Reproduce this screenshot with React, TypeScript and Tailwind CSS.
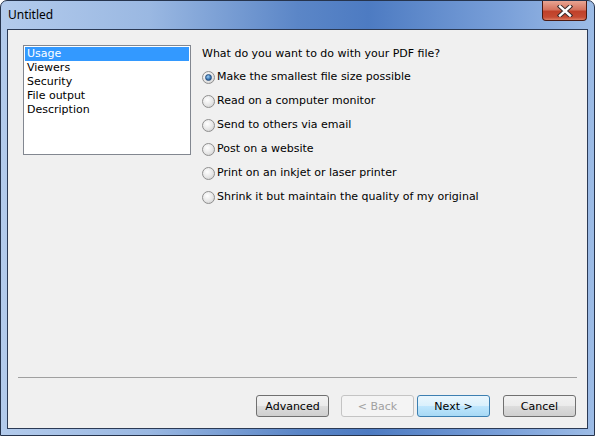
import React from "react";

const usages = [
  "Make the smallest file size possible",
  "Read on a computer monitor",
  "Send to others via email",
  "Post on a website",
  "Print on an inkjet or laser printer",
  "Shrink it but maintain the quality of my original",
];

const sections = ["Usage", "Viewers", "Security", "File output", "Description"];

const Radio = ({ checked }: { checked: boolean }) => (
  <span className="relative flex h-[13px] w-[13px] shrink-0 items-center justify-center rounded-full border border-[#8f8f8f] bg-[radial-gradient(circle_at_40%_35%,#ffffff_0%,#e6e6e6_55%,#c9c9c9_100%)]">
    {checked && (
      <span className="h-[7px] w-[7px] rounded-full border border-[#29507e] bg-[radial-gradient(circle_at_40%_35%,#9fd0f5_0%,#3b79b8_55%,#1c416b_100%)]" />
    )}
  </span>
);

const Button = ({
  label,
  disabled,
  focused,
}: {
  label: string;
  disabled?: boolean;
  focused?: boolean;
}) => (
  <button
    className={
      "h-[22px] w-[73px] rounded-[3px] border text-[11px] leading-none " +
      (disabled
        ? "border-[#c4c4c4] bg-[#f4f4f4] text-[#a0a0a0]"
        : focused
          ? "border-[#3c7fb1] bg-[linear-gradient(#eaf6fd_0%,#d9f0fc_50%,#bee6fd_51%,#a7d9f5_100%)] text-black"
          : "border-[#707070] bg-[linear-gradient(#f2f2f2_0%,#ebebeb_50%,#dddddd_51%,#cfcfcf_100%)] text-black")
    }
  >
    {label}
  </button>
);

const App = (): JSX.Element => {
  return (
    <div className="flex h-[436px] w-[595px] flex-col rounded-t-[7px] border border-[#26344d] bg-[linear-gradient(90deg,#b3cbec_0%,#9ab8e2_25%,#5b86c7_50%,#4d7bc2_62%,#7aa0d9_85%,#9dbce6_100%)] px-[6px] pb-[6px] font-['DejaVu_Sans',sans-serif]">
      <div className="flex h-[28px] items-start justify-between">
        <span className="mt-[6px] pl-[1px] font-['Noto_Sans',sans-serif] text-[12px] leading-[16px] text-black">
          Untitled
        </span>
        <span className="mr-[1px] flex h-[20px] w-[45px] items-center justify-center rounded-b-[4px] border border-t-0 border-[#4a1a12] bg-[linear-gradient(#e8a593_0%,#d5735e_45%,#c0412a_55%,#c54b33_85%,#dd7d62_100%)]">
          <svg width="16" height="12" viewBox="0 0 16 12">
            <path
              d="M3 1.5 L13 10.5 M13 1.5 L3 10.5"
              stroke="#3a2b2b"
              strokeWidth="4.4"
              strokeLinecap="square"
            />
            <path
              d="M3 1.5 L13 10.5 M13 1.5 L3 10.5"
              stroke="#ffffff"
              strokeWidth="2.4"
              strokeLinecap="square"
            />
          </svg>
        </span>
      </div>

      <div className="flex flex-1 flex-col border border-[#2b3a55] bg-[#f0f0f0] text-[11px] text-black">
        <div className="flex flex-1 gap-[11px] px-[15px] pt-[15px]">
          <div className="h-[110px] w-[168px] shrink-0 border border-[#828790] bg-white p-[1px]">
            {sections.map((s, i) => (
              <div
                key={s}
                className={
                  "h-[14px] pl-[2px] leading-[14px] " +
                  (i === 0 ? "bg-[#3399ff] text-white" : "text-black")
                }
              >
                {s}
              </div>
            ))}
          </div>
          <div className="flex flex-col pt-[2px]">
            <div className="h-[14px] leading-[14px]">
              What do you want to do with your PDF file?
            </div>
            <div className="mt-[4px] flex flex-col">
              {usages.map((u, i) => (
                <div key={u} className="flex h-[24px] items-center gap-[2px]">
                  <Radio checked={i === 0} />
                  <span>{u}</span>
                </div>
              ))}
            </div>
          </div>
        </div>

        <div className="mx-[10px] border-t border-[#a0a0a0]" />
        <div className="flex justify-end px-[11px] pb-[11px] pt-[17px]">
          <Button label="Advanced" />
          <span className="ml-[12px]">
            <Button label="< Back" disabled />
          </span>
          <span className="ml-[3px]">
            <Button label="Next >" focused />
          </span>
          <span className="ml-[13px]">
            <Button label="Cancel" />
          </span>
        </div>
      </div>
    </div>
  );
};

export default App;
